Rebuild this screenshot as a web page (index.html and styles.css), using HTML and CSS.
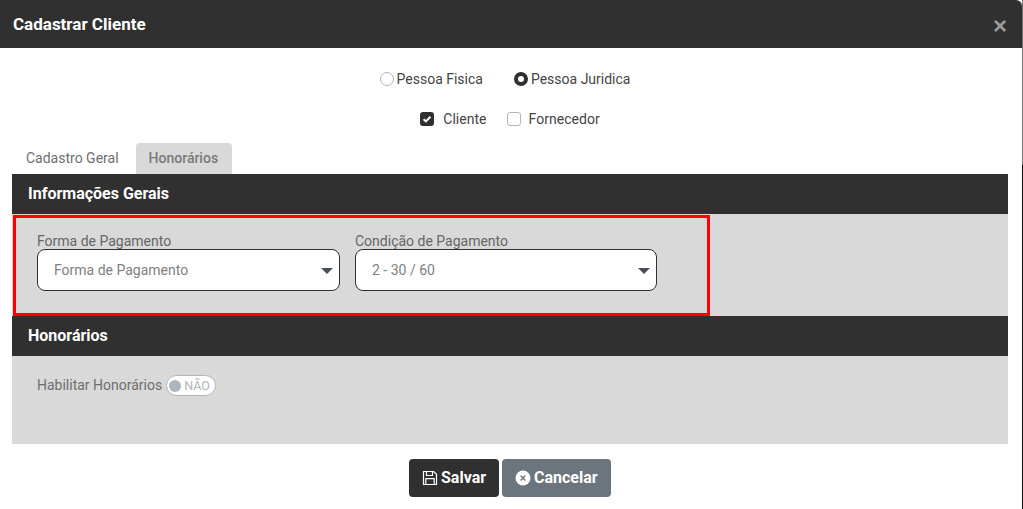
FILE: index.html
```html
<!DOCTYPE html>
<html lang="pt">
<head>
<meta charset="utf-8">
<title>Cadastrar Cliente</title>
<link rel="stylesheet" href="styles.css">
</head>
<body>
<div class="modal">
  <header class="modal-header">
    <h1>Cadastrar Cliente</h1>
    <span class="close">×</span>
  </header>
  <div class="modal-body">
    <div class="radios">
      <label class="opt"><span class="radio"></span>Pessoa Fisica</label>
      <label class="opt"><span class="radio on"></span>Pessoa Juridica</label>
    </div>
    <div class="checks">
      <label class="chk"><span class="box on"><svg viewBox="0 0 14 14" width="14" height="14"><path d="M3.6 7.2l2.3 2.2 4.5-4.6" fill="none" stroke="#fff" stroke-width="2"/></svg></span>Cliente</label>
      <label class="chk"><span class="box"></span>Fornecedor</label>
    </div>
    <nav class="tabs">
      <span class="tab">Cadastro Geral</span>
      <span class="tab active">Honorários</span>
    </nav>
    <section class="panel">
      <h2 class="bar">Informações Gerais</h2>
      <div class="fields">
        <div class="field">
          <label>Forma de Pagamento</label>
          <div class="select">Forma de Pagamento</div>
        </div>
        <div class="field">
          <label>Condição de Pagamento</label>
          <div class="select">2 - 30 / 60</div>
        </div>
      </div>
      <h2 class="bar">Honorários</h2>
      <div class="fees">
        <span class="fee-label">Habilitar Honorários</span>
        <span class="toggle"><span class="knob"></span>NÃO</span>
      </div>
      <div class="highlight"></div>
    </section>
    <footer class="actions">
      <button class="btn save"><svg viewBox="0 0 16 16" width="16" height="16"><path d="M1.5 1.5h10.2l2.8 2.8v10.2h-13z M4.5 1.5v4h6v-4 M3.8 14.5v-5.8h8.4v5.8" fill="none" stroke="#fff" stroke-width="1.2"/></svg><span class="btn-text">Salvar</span></button>
      <button class="btn cancel"><svg viewBox="0 0 16 16" width="16" height="16"><circle cx="8" cy="8" r="7.5" fill="#fff"/><path d="M5.6 5.6l4.8 4.8M10.4 5.6l-4.8 4.8" stroke="#6c757d" stroke-width="1.4"/></svg><span class="btn-text">Cancelar</span></button>
    </footer>
  </div>
</div>
</body>
</html>
```

FILE: styles.css
```css
* { box-sizing: border-box; }
html, body { margin: 0; height: 100%; overflow: hidden; }
body { font-family: Roboto, "Liberation Sans", sans-serif; color: #4d4d4d; background: linear-gradient(#777 165px, #111 165px); }
.modal { width: 1022px; height: 509px; display: flex; flex-direction: column; background: #fff; }
.modal-header { height: 48px; flex: none; background: #303030; border-radius: 0 6px 0 0; display: flex; align-items: center; justify-content: space-between; padding: 0 15px 0 13px; }
.modal-header h1 { margin: 0 0 -1px; font-size: 17px; font-weight: 700; color: #fff; line-height: 1; }
.close { color: #9a9a9a; font-size: 24px; font-weight: 700; line-height: 1; margin-top: 4px; font-family: "Liberation Sans", sans-serif; }
.modal-body { padding: 0 14px 0 12px; flex: 1; }
.radios { display: flex; justify-content: center; gap: 31px; padding: 23px 10px 0 0; height: 60px; font-size: 14px; }
.opt { display: flex; align-items: flex-start; gap: 3px; line-height: 16px; color: #444; }
.radio { width: 14px; height: 14px; margin-top: 1px; border-radius: 50%; border: 1px solid #adb5bd; background: #fff; }
.radio.on { border: 4px solid #303030; }
.checks { display: flex; justify-content: center; gap: 20px; height: 35px; padding: 3px 0 0; font-size: 14px; }
.chk { display: flex; align-items: flex-start; gap: 8px; line-height: 16px; color: #444; letter-spacing: .03px; }
.chk:first-child { gap: 9px; }
.box { width: 14px; height: 14px; margin-top: 1px; border-radius: 3px; border: 1px solid #adb5bd; background: #fff; }
.box.on { background: #303030; border: 0; display: block; }
.box svg { display: block; }
.tabs { display: flex; height: 31px; padding-left: 2px; font-size: 14px; }
.tab { padding: 7px 12px 0; height: 31px; color: #6e6e6e; line-height: 16px; margin-right: 5px; }
.tab.active { background: #d9d9d9; color: #7a7a7a; font-weight: 500; border-radius: 4px 4px 0 0; padding: 7px 14px 0 13px; }
.panel { position: relative; background: #d9d9d9; width: 996px; }
.bar { margin: 0; height: 40px; background: #303030; color: #fff; font-size: 16px; font-weight: 700; line-height: 40px; padding-left: 16px; }
.fields { display: flex; gap: 15px; height: 102px; padding: 19px 0 0 25px; }
.field { width: 303px; }
.field:nth-child(2) { width: 302px; }
.field label { display: block; font-size: 14px; line-height: 16px; color: #666; }
.select { position: relative; height: 42px; border: 1px solid #303030; border-radius: 8px; background: #fff; font-size: 14px; line-height: 40px; padding-left: 16px; color: #808080; }
.select::after { content: ""; position: absolute; right: 6px; top: 18px; border: 6px solid transparent; border-top: 6px solid #495057; border-bottom: 0; }
.fees { height: 88px; padding: 19px 0 0 25px; display: flex; align-items: flex-start; gap: 4px; font-size: 14px; color: #6e6e6e; }
.fee-label { line-height: 21px; }
.toggle { height: 21px; width: 50px; border: 1px solid #adb5bd; border-radius: 11px; background: #fff; display: flex; align-items: center; gap: 3px; padding-left: 2px; font-size: 12.5px; font-weight: 400; color: #b0b5ba; }
.knob { width: 12px; height: 12px; border-radius: 50%; background: #adb5bd; flex: none; }
.highlight { position: absolute; left: 1px; top: 41px; width: 697px; height: 101px; border: 3px solid #f00; pointer-events: none; }
.actions { display: flex; justify-content: center; gap: 3px; padding-top: 15px; }
.btn { height: 38px; border: 0; border-radius: 4px; color: #fff; font: 700 16px Roboto, "Liberation Sans", sans-serif; display: flex; align-items: center; gap: 3px; padding: 0; }
.btn svg { flex: none; }
.btn-text { margin-top: -2px; }
.save { width: 90px; background: #303030; padding-left: 13px; }
.cancel { width: 109px; background: #6c757d; padding-left: 13px; }
```
